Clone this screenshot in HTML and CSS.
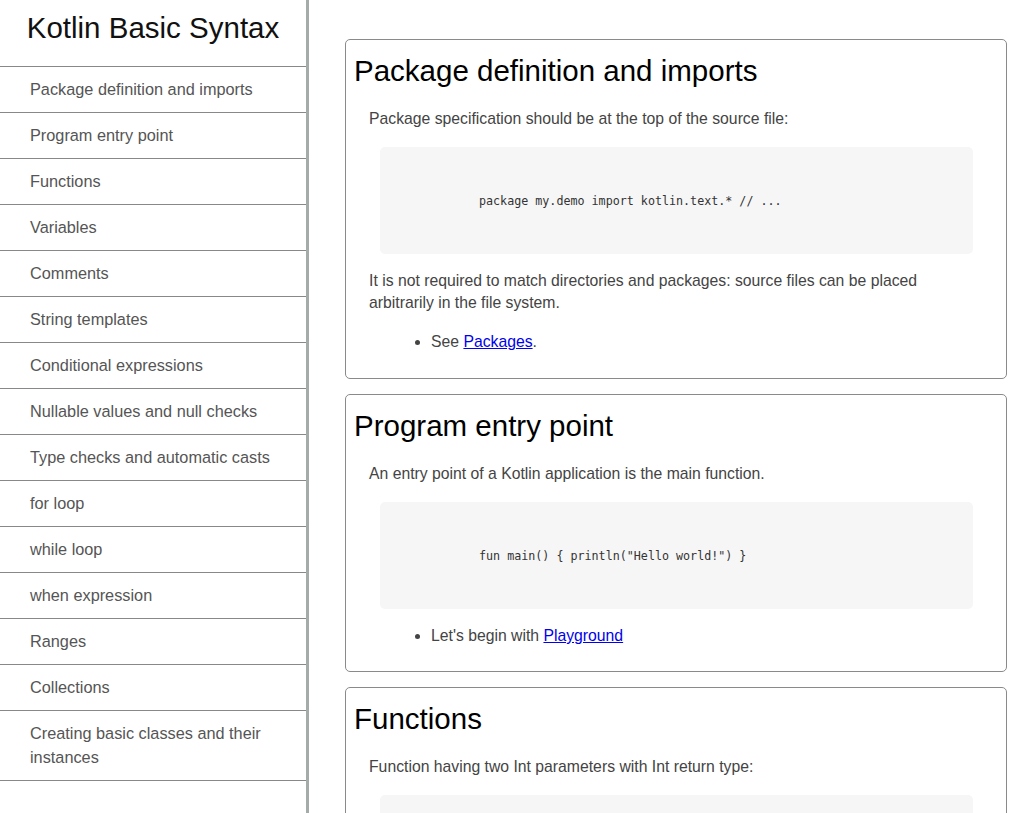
FILE: index.html
```html
<!DOCTYPE html>
<html lang="en">
<head>
<meta charset="utf-8">
<title>Kotlin Basic Syntax</title>
<link rel="stylesheet" href="styles.css">
</head>
<body>
<div class="layout">
  <aside class="sidebar">
    <div class="brand">Kotlin Basic Syntax</div>
    <ul class="nav">
      <li>Package definition and imports</li>
      <li>Program entry point</li>
      <li>Functions</li>
      <li>Variables</li>
      <li>Comments</li>
      <li>String templates</li>
      <li>Conditional expressions</li>
      <li>Nullable values and null checks</li>
      <li>Type checks and automatic casts</li>
      <li>for loop</li>
      <li>while loop</li>
      <li>when expression</li>
      <li>Ranges</li>
      <li>Collections</li>
      <li>Creating basic classes and their instances</li>
    </ul>
  </aside>
  <main class="main">
    <section class="card">
      <h2>Package definition and imports</h2>
      <p>Package specification should be at the top of the source file:</p>
      <div class="code"><code>package my.demo import kotlin.text.* // ...</code></div>
      <p>It is not required to match directories and packages: source files can be placed arbitrarily in the file system.</p>
      <ul class="refs">
        <li>See <a href="#">Packages</a>.</li>
      </ul>
    </section>
    <section class="card">
      <h2>Program entry point</h2>
      <p>An entry point of a Kotlin application is the main function.</p>
      <div class="code"><code>fun main() { println("Hello world!") }</code></div>
      <ul class="refs">
        <li>Let's begin with <a href="#">Playground</a></li>
      </ul>
    </section>
    <section class="card">
      <h2>Functions</h2>
      <p>Function having two Int parameters with Int return type:</p>
      <div class="code"><code>fun sum(a: Int, b: Int): Int { return a + b }</code></div>
      <p>A function body can be an expression. Its return type is inferred.</p>
    </section>
  </main>
</div>
</body>
</html>
```
FILE: styles.css
```css
html, body {
  margin: 0;
  padding: 0;
  background: #ffffff;
}

body {
  font-family: "Liberation Sans", Arial, sans-serif;
  font-size: 16px;
  color: #444444;
}

.layout {
  display: flex;
  align-items: flex-start;
}

.sidebar {
  width: 306px;
  flex: 0 0 306px;
  min-height: 100vh;
  border-right: 3px solid #a3abab;
  box-sizing: content-box;
}

.brand {
  height: 66px;
  box-sizing: border-box;
  padding-top: 12px;
  font-size: 29.5px;
  line-height: 32px;
  text-align: center;
  color: #111111;
}

.nav {
  list-style: none;
  margin: 0;
  padding: 0;
  border-top: 1px solid #888888;
}

.nav li {
  padding: 10px 30px 11px;
  font-size: 16.3px;
  line-height: 24px;
  border-bottom: 1px solid #888888;
  color: #555555;
}

.main {
  flex: 1;
  padding: 39px 14px 0 36px;
  min-width: 0;
}

.card {
  border: 1px solid #8a8a8a;
  border-radius: 5px;
  padding: 8px;
  margin-bottom: 15px;
}

.card h2 {
  margin: 7px 0 21px;
  font-size: 29.5px;
  line-height: 32px;
  font-weight: normal;
  color: #000000;
}

.card p {
  margin: 0 15px;
  font-size: 15.75px;
  line-height: 22px;
}

.code {
  margin: 17px 25px 16px 26px;
  padding: 45px 99px;
  background: #f6f6f6;
  border-radius: 5px;
  line-height: 16px;
}

.code code {
  font-family: "DejaVu Sans Mono", "Liberation Mono", monospace;
  font-size: 11.7px;
  color: #333333;
}

.refs {
  margin: 16px 0 16px 37px;
  padding-left: 40px;
  font-size: 15.75px;
  line-height: 22px;
}

.card p + .refs {
  margin-top: 17px;
  margin-bottom: 17px;
}

.refs a {
  color: #0000ee;
  text-decoration: underline;
}
```
